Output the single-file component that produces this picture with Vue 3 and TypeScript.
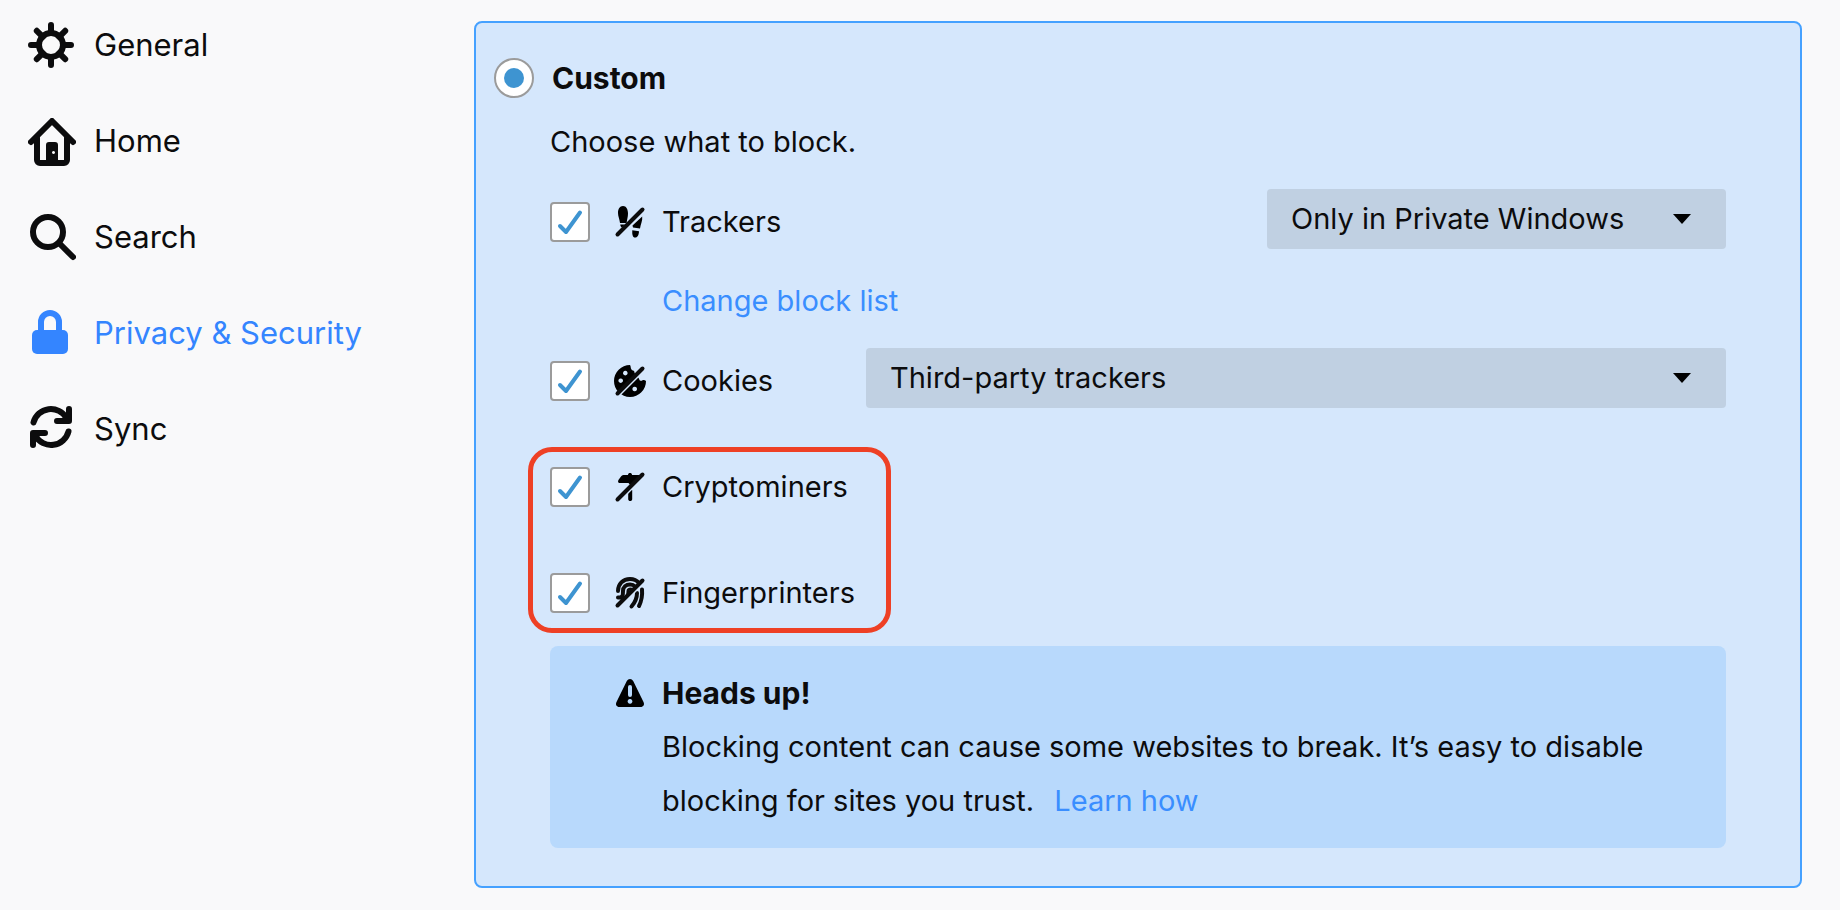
<script setup lang="ts">
import { ref } from 'vue'

type Icon = 'general' | 'home' | 'search' | 'lock' | 'sync'

const categories: { id: Icon; label: string }[] = [
  { id: 'general', label: 'General' },
  { id: 'home', label: 'Home' },
  { id: 'search', label: 'Search' },
  { id: 'lock', label: 'Privacy & Security' },
  { id: 'sync', label: 'Sync' },
]
const current = ref<Icon>('lock')

const mode = ref('custom')
const trackers = ref(true)
const cookies = ref(true)
const cryptominers = ref(true)
const fingerprinters = ref(true)
const trackersScope = ref('private')
const cookiesScope = ref('third-party')
</script>

<template>
  <div class="page">
    <nav class="sidebar" aria-label="Categories">
      <a
        v-for="c in categories"
        :key="c.id"
        href="#"
        class="category"
        :class="{ selected: c.id === current }"
        @click.prevent="current = c.id"
      >
        <svg class="category-icon" viewBox="0 0 48 48" aria-hidden="true">
          <g v-if="c.id === 'general'" class="line">
            <circle cx="23" cy="23" r="12" />
            <path d="M23 3v8M23 35v8M3 23h8M35 23h8M8.8 8.8l6 6M31.2 31.2l6 6M37.2 8.8l-6 6M14.8 31.2l-6 6" />
          </g>
          <g v-else-if="c.id === 'home'">
            <path class="line" d="M3 24L24 3l21 21" />
            <path class="line" d="M9 20v22a3 3 0 0 0 3 3h24a3 3 0 0 0 3-3V20" />
            <path class="solid" fill-rule="evenodd" d="M18 44V27a3 3 0 0 1 3-3h6a3 3 0 0 1 3 3v17zM25.500 33a1.500 1.500 0 1 0 .01 0z" />
          </g>
          <g v-else-if="c.id === 'search'" class="line">
            <circle cx="20" cy="18" r="15" />
            <path d="M31 29l14 14" />
          </g>
          <g v-else-if="c.id === 'lock'">
            <path class="line butt" d="M13 22V12a9 9 0 0 1 18 0v10" />
            <rect class="solid" x="4" y="20" width="36" height="24" rx="5" />
          </g>
          <g v-else>
            <path class="line" d="M5.500 16.500A18 18 0 0 1 38.500 12M41 3v12H29" />
            <path class="line" d="M40.500 25.500A18 18 0 0 1 7.500 30M5 39V27h12" />
            <path class="solid" d="M41 5v10h-9zM5 37V27h9z" />
          </g>
        </svg>
        <span class="category-label">{{ c.label }}</span>
      </a>
    </nav>

    <main class="panel">
      <label class="mode">
        <input v-model="mode" class="radio" type="radio" name="mode" value="custom" />
        <span>Custom</span>
      </label>

      <div class="body">
        <p class="intro">Choose what to block.</p>

        <div class="row">
          <label class="option">
            <input v-model="trackers" class="check" type="checkbox" />
            <svg class="option-icon" viewBox="0 0 32 32" aria-hidden="true">
              <path d="M9 0c3.300 0 5 3.500 5 7.500 0 3.500-1 6-1.400 9.500H6C5.600 13 4 10.500 4 7c0-4 1.700-7 5-7zM6.200 18.500h4.800l-3 3c-1-.5-1.600-1.500-1.800-3z" />
              <path d="M28.200 10.500c.6 4-1.700 8-2.200 12l-7-1-.5-2zM18.300 24.200l6.700 1c-.2 4-1.500 6.500-4 6.300-2.200-.2-3-2.500-2.700-7.300z" />
              <path class="gap" d="M4.500 31L31 4.500" />
              <path class="slash" d="M3.500 28.500L28.500 3.500" />
            </svg>
            <span>Trackers</span>
          </label>
          <div class="dropdown dropdown-narrow">
            <select v-model="trackersScope" aria-label="Trackers">
              <option value="private">Only in Private Windows</option>
              <option value="all">In all windows</option>
            </select>
            <svg class="arrow" viewBox="0 0 18 10" aria-hidden="true"><path d="M0 0h18L9 10z" /></svg>
          </div>
        </div>

        <p class="block-list"><a href="#">Change block list</a></p>

        <div class="row">
          <label class="option option-fixed">
            <input v-model="cookies" class="check" type="checkbox" />
            <svg class="option-icon" viewBox="0 0 32 32" aria-hidden="true">
              <path
                fill-rule="evenodd"
                d="M16 0c1 1 .3 3 1.500 4.500 1 1.200 3 .8 3 3 0 2 3.500 1.500 3.500 4 0 1.700 1 1.500 1.200 2.800.3 1.600 2.300 2 3.300 1 .8-.8 2.500-.3 3.500.7A16 16 0 1 1 16 0zM11.300 5.800a2.300 2.300 0 1 0 .01 0zM6.700 13.400a2.300 2.300 0 1 0 .01 0zM20.700 21.700a2.300 2.300 0 1 0 .01 0z"
              />
              <path class="gap" d="M4.500 31L27 8.500" />
              <path class="slash" d="M3.500 28.500L28.500 3.500" />
            </svg>
            <span>Cookies</span>
          </label>
          <div class="dropdown dropdown-wide">
            <select v-model="cookiesScope" aria-label="Cookies">
              <option value="third-party">Third-party trackers</option>
              <option value="all">All cookies</option>
            </select>
            <svg class="arrow" viewBox="0 0 18 10" aria-hidden="true"><path d="M0 0h18L9 10z" /></svg>
          </div>
        </div>

        <div class="highlight">
          <div class="row">
            <label class="option">
              <input v-model="cryptominers" class="check" type="checkbox" />
              <svg class="option-icon" viewBox="0 0 32 32" aria-hidden="true">
                <path d="M14.200 19h4v9c0 2.700-4 2.700-4 0z" />
                <path class="gap" d="M11 24.500L22 13.500" />
                <path d="M14 4c0-2.600 4-2.600 4 0h10L17 15l-2.500-3H6c-2.300 0-2.300-2-1.200-3.500L7 5.500C8 4.300 9 4 10.500 4z" />
                <path class="slash" d="M3.500 28.500L28.500 3.500" />
              </svg>
              <span>Cryptominers</span>
            </label>
          </div>
          <div class="row">
            <label class="option">
              <input v-model="fingerprinters" class="check" type="checkbox" />
              <svg class="option-icon" viewBox="0 0 32 32" aria-hidden="true">
                <path class="ridge" d="M4 14c0-7 5-12 12-12 4 0 7 1.600 9 4" />
                <path class="ridge" d="M4 20.500c5 0 5-2 5-6.500 0-4 3-6.500 7-6.500 2 0 4 .8 5 2" />
                <path class="ridge thin" d="M8 23c5-1 6-4 6-9 0-1.500 1-2 3-2" />
                <path class="ridge" d="M23 16c0 5-1.500 9-5.500 13.500M28 12.500c.5 6-.5 11.500-3 16.500" />
                <path class="gap" d="M4.500 31L31 4.500" />
                <path class="slash" d="M3.500 28.500L28.500 3.500" />
              </svg>
              <span>Fingerprinters</span>
            </label>
          </div>
        </div>

        <section class="notice">
          <svg class="notice-icon" viewBox="0 0 32 32" aria-hidden="true">
            <path
              fill-rule="evenodd"
              d="M12.800 4c1.500-2.700 4.900-2.700 6.400 0l10.300 21c1.300 2.600 0 5-3 5h-21c-3 0-4.300-2.400-3-5zM16 8a2 2 0 0 0-2 2v8a2 2 0 0 0 4 0v-8a2 2 0 0 0-2-2zM16 22a2.400 2.400 0 1 0 .01 0z"
            />
          </svg>
          <div>
            <h2>Heads up!</h2>
            <p>
              Blocking content can cause some websites to break. It’s easy to disable blocking for sites you trust.
              <a class="learn" href="#">Learn how</a>
            </p>
          </div>
        </section>
      </div>
    </main>
  </div>
</template>

<style>
body {
  background: #f9f9fa;
}
</style>

<style scoped>
.page {
  display: flex;
  align-items: flex-start;
  padding: 21px 38px 22px 28px;
  font-family: Inter, "Liberation Sans", sans-serif;
  font-size: 29px;
  line-height: 40px;
  color: #0c0c0d;
}

h2,
p {
  margin: 0;
}

h2 {
  font-size: 30px;
}

a {
  color: #3a8eff;
  text-decoration: none;
}

.sidebar {
  flex: 0 0 446px;
  display: flex;
  flex-direction: column;
  gap: 48px;
  padding-top: 1px;
}

.category {
  display: flex;
  align-items: center;
  gap: 18px;
  height: 48px;
  font-size: 31px;
  color: #0c0c0d;
}

.category.selected {
  color: #3485ff;
}

.category-icon {
  width: 48px;
  height: 48px;
}

.category-label {
  padding-bottom: 3px;
}

.line {
  fill: none;
  stroke: currentColor;
  stroke-width: 6;
  stroke-linecap: round;
  stroke-linejoin: round;
}

.butt {
  stroke-linecap: butt;
}

.solid {
  fill: currentColor;
}

.panel {
  flex: 1;
  min-width: 0;
  padding: 35px 74px 38px 18px;
  border: 2px solid #45a1ff;
  border-radius: 8px;
  background: #d5e7fc;
}

.mode {
  display: flex;
  align-items: center;
  gap: 18px;
  font-size: 30px;
  font-weight: 700;
}

.radio,
.check {
  appearance: none;
  flex: none;
  display: grid;
  place-items: center;
  width: 40px;
  height: 40px;
  margin: 0;
  border: 2px solid #9b9b9b;
  background: #fff;
}

.radio {
  border-radius: 50%;
}

.radio:checked::before {
  content: "";
  width: 20px;
  height: 20px;
  border-radius: 50%;
  background: #3e94d1;
}

.check {
  border-radius: 4px;
}

.check:checked {
  background: #fff url("data:image/svg+xml,%3Csvg xmlns='http://www.w3.org/2000/svg' viewBox='0 0 36 36'%3E%3Cpath d='M8 22l6 6L28 8.500' fill='none' stroke='%233e94d1' stroke-width='4' stroke-linecap='round' stroke-linejoin='round'/%3E%3C/svg%3E") center / 36px 36px no-repeat;
}

.body {
  padding: 24px 0 0 56px;
}

.intro {
  margin-bottom: 27px;
}

.row {
  display: flex;
  align-items: flex-start;
  min-height: 66px;
}

.option {
  display: flex;
  align-items: center;
  height: 66px;
}

.option-fixed {
  flex: 0 0 316px;
}

.option-icon {
  width: 32px;
  height: 32px;
  margin: 0 16px 0 24px;
  overflow: visible;
}

.slash,
.ridge {
  fill: none;
  stroke: #0c0c0d;
  stroke-width: 4;
  stroke-linecap: round;
}

.thin {
  stroke-width: 3;
}

.gap {
  fill: none;
  stroke: #d5e7fc;
  stroke-width: 2;
}

.dropdown {
  position: relative;
}

.dropdown-narrow {
  width: 459px;
  margin-left: auto;
}

.dropdown-wide {
  flex: 1;
}

select {
  appearance: none;
  display: block;
  width: 100%;
  height: 60px;
  padding: 0 60px 0 24px;
  border: 0;
  border-radius: 4px;
  background: #c0d0e2;
  color: #0c0c0d;
  font: inherit;
}

.arrow {
  position: absolute;
  right: 35px;
  top: 25px;
  width: 18px;
  height: 10px;
  pointer-events: none;
}

.block-list {
  padding: 26px 0 27px 112px;
}

.highlight {
  display: flex;
  flex-direction: column;
  gap: 40px;
  width: fit-content;
  margin: 33px 0 13px -22px;
  padding: 2px 31px 2px 17px;
  border: 5px solid #ee4025;
  border-radius: 24px;
}

.notice {
  display: flex;
  gap: 16px;
  padding: 20px 64px;
  border-radius: 8px;
  background: #b8d9fc;
  line-height: 54px;
}

.notice-icon {
  flex: none;
  width: 32px;
  height: 32px;
  margin-top: 11px;
}

.learn {
  margin-left: 12px;
}
</style>
